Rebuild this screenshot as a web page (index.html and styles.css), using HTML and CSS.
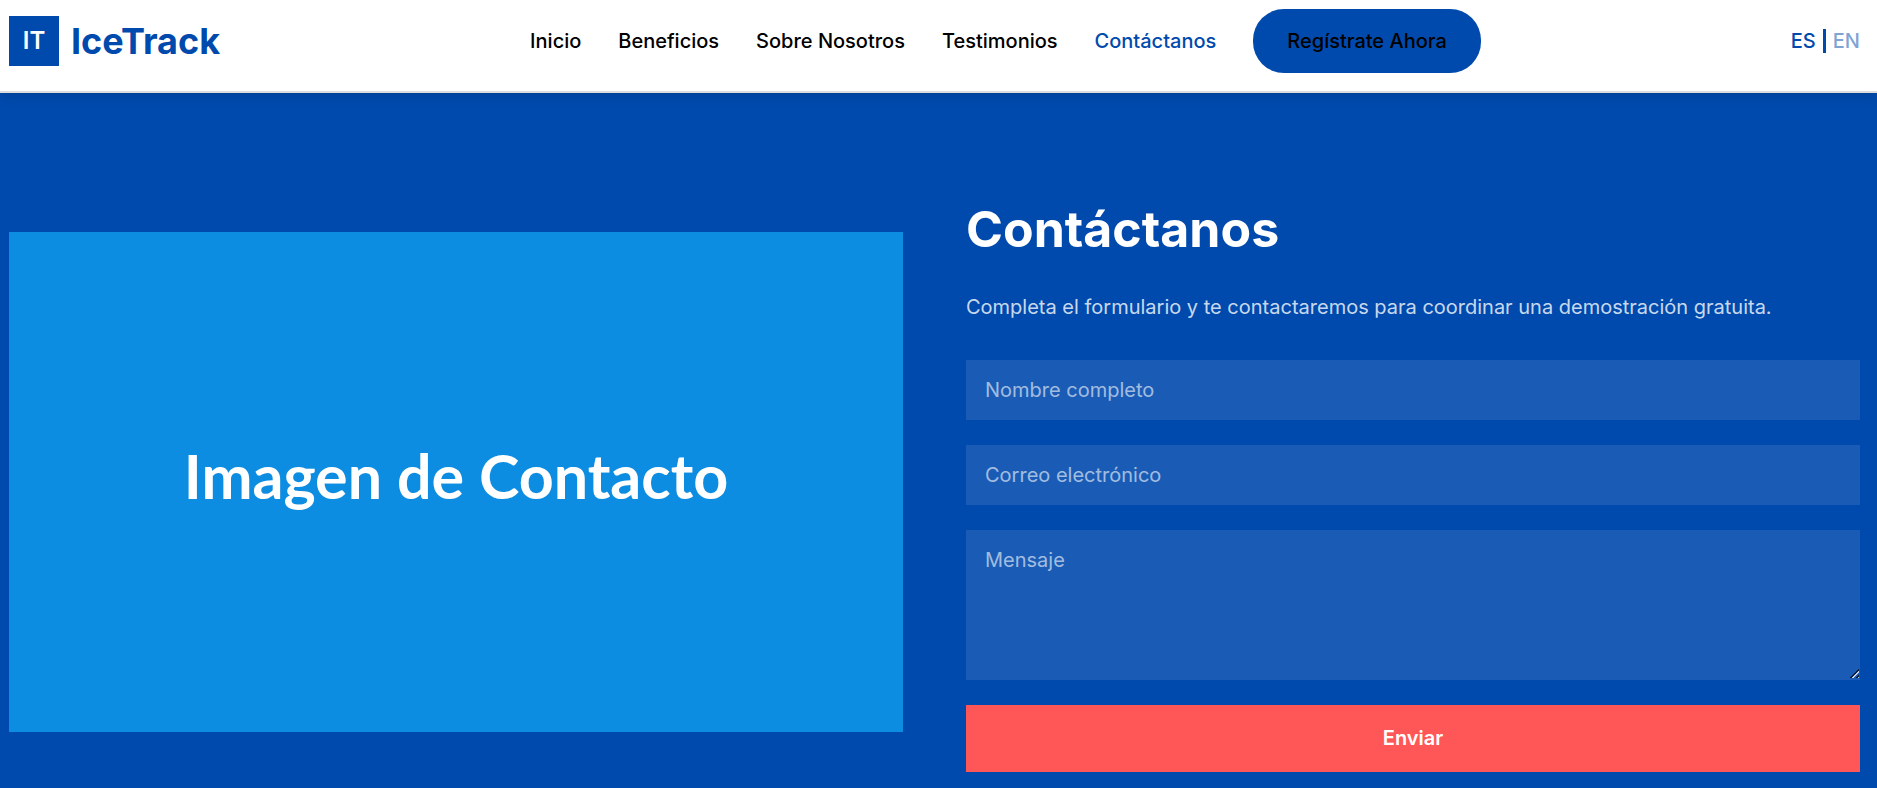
FILE: index.html
```html
<!DOCTYPE html>
<html lang="es">
<head>
<meta charset="utf-8">
<meta name="viewport" content="width=device-width, initial-scale=1">
<title>IceTrack</title>
<link rel="stylesheet" href="styles.css">
</head>
<body>
<header class="header">
  <a class="logo" href="#"><span class="logo-mark">IT</span><span class="logo-name">IceTrack</span></a>
  <nav class="nav">
    <a href="#inicio">Inicio</a>
    <a href="#beneficios">Beneficios</a>
    <a href="#nosotros">Sobre Nosotros</a>
    <a href="#testimonios">Testimonios</a>
    <a class="active" href="#contacto">Contáctanos</a>
    <a class="cta" href="#registro">Regístrate Ahora</a>
  </nav>
  <div class="languages">
    <a href="#es">ES</a>
    <span class="divider"></span>
    <a class="inactive" href="#en">EN</a>
  </div>
</header>
<main class="contact" id="contacto">
  <div class="picture">Imagen de Contacto</div>
  <section class="panel">
    <h1>Contáctanos</h1>
    <p>Completa el formulario y te contactaremos para coordinar una demostración gratuita.</p>
    <form class="form">
      <input type="text" placeholder="Nombre completo" aria-label="Nombre completo">
      <input type="email" placeholder="Correo electrónico" aria-label="Correo electrónico">
      <textarea placeholder="Mensaje" aria-label="Mensaje"></textarea>
      <button type="submit">Enviar</button>
    </form>
  </section>
</main>
</body>
</html>
```
FILE: styles.css
```css
* {
  box-sizing: border-box;
}

body {
  margin: 0;
  background: #004aad;
  font-family: Inter, "Liberation Sans", sans-serif;
  font-size: 20px;
  line-height: 30px;
  color: #000;
}

a {
  color: inherit;
  text-decoration: none;
}

.header {
  position: relative;
  display: flex;
  justify-content: space-between;
  align-items: center;
  padding: 9px 17px 18px 9px;
  background: #fff;
  border-bottom: 2px solid #ddd;
  box-shadow: 0 2px 12px rgba(0, 0, 0, 0.15);
}

.logo {
  display: flex;
  align-items: center;
  gap: 12px;
  color: #004aad;
}

.logo-mark {
  display: grid;
  place-items: center;
  width: 50px;
  height: 50px;
  background: #004aad;
  color: #fff;
  font-size: 24px;
  font-weight: 600;
}

.logo-name {
  font-size: 36px;
  font-weight: 700;
}

.nav {
  display: flex;
  align-items: center;
  gap: 37px;
  font-weight: 500;
}

.nav .active {
  color: #004aad;
}

.cta {
  padding: 17px 34px;
  border-radius: 31px;
  background: #004aad;
}

.languages {
  display: flex;
  align-items: center;
  gap: 7px;
  color: #004aad;
  font-weight: 500;
}

.divider {
  width: 3px;
  height: 24px;
  background: #004aad;
}

.inactive {
  opacity: 0.5;
}

.contact {
  display: grid;
  grid-template-columns: 1fr 1fr;
  align-items: center;
  gap: 63px;
  padding: 99px 17px 15px 9px;
}

.picture {
  display: grid;
  place-items: center;
  min-height: 500px;
  padding-bottom: 12px;
  background: #0d8de1;
  color: #fff;
  font-family: Lato, sans-serif;
  font-size: 61px;
  font-weight: 700;
  line-height: 74px;
}

.panel h1 {
  margin: 0 0 25px;
  color: #fff;
  font-size: 50px;
  font-weight: 700;
  line-height: 75px;
}

.panel p {
  margin: 0 0 38px;
  color: rgba(255, 255, 255, 0.8);
}

.form {
  display: grid;
  gap: 25px;
}

.form input,
.form textarea,
.form button {
  display: block;
  width: 100%;
  margin: 0;
  border: 0;
  border-radius: 0;
  font: inherit;
  color: #fff;
}

.form input,
.form textarea {
  padding: 15px 19px;
  background: rgba(255, 255, 255, 0.1);
}

.form textarea {
  height: 150px;
  resize: vertical;
}

.form textarea::-webkit-resizer {
  background: linear-gradient(135deg, transparent 48%, #0b1c33 48% 58%, #c3d2e8 58% 72%, transparent 72% 80%, #0b1c33 80% 90%, #c3d2e8 90%) right 1px bottom 2px / 9px 9px no-repeat;
}

.form ::placeholder {
  color: rgba(255, 255, 255, 0.6);
}

.form button {
  padding: 18px 38px 19px;
  background: #ff5757;
  font-weight: 600;
}
```
